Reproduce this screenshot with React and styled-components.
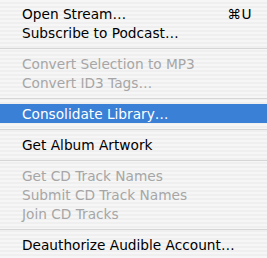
import React from 'react';
import styled, { createGlobalStyle } from "styled-components";

const items = [
    { label: 'Open Stream…', shortcut: '⌘U' },
    { label: 'Subscribe to Podcast…' },
    { sep: true },
    { label: 'Convert Selection to MP3', disabled: true },
    { label: 'Convert ID3 Tags…', disabled: true },
    { sep: true },
    { label: 'Consolidate Library…', active: true },
    { sep: true },
    { label: 'Get Album Artwork' },
    { sep: true },
    { label: 'Get CD Track Names', disabled: true },
    { label: 'Submit CD Track Names', disabled: true },
    { label: 'Join CD Tracks', disabled: true },
    { sep: true },
    { label: 'Deauthorize Audible Account…' },
];

const App = () => {
    return (
        <>
            <GlobalStyle />
            <Menu>
                {items.map((item, i) =>
                    item.sep ? (
                        <Separator key={i} />
                    ) : (
                        <Item key={i} $disabled={item.disabled} $active={item.active}>
                            <span>{item.label}</span>
                            {item.shortcut && <Shortcut>{item.shortcut}</Shortcut>}
                        </Item>
                    )
                )}
            </Menu>
        </>
    );
};

export default App;

// Style
const
    GlobalStyle = createGlobalStyle`
    html, body {
        margin: 0;
        padding: 0;
        background: #f4f4f4;
    }
`,
    Menu = styled.div`
    width: 267px;
    height: 258px;
    box-sizing: border-box;
    padding-top: 4px;
    display: flex;
    flex-direction: column;
    font-family: "DejaVu Sans", sans-serif;
    font-size: 13.7px;
    background: repeating-linear-gradient(
        to bottom,
        #f6f6f6 0px,
        #f6f6f6 2px,
        #efefef 2px,
        #efefef 4px
    );
`,
    Item = styled.div`
    height: 19px;
    flex: none;
    display: flex;
    align-items: center;
    justify-content: space-between;
    padding: 0 15px 0 22px;
    color: ${p => p.$disabled ? '#a6a6a6' : p.$active ? '#ffffff' : '#000000'};
    background: ${p => p.$active ? '#3a80d7' : 'transparent'};
    white-space: nowrap;
`,
    Shortcut = styled.span`
    letter-spacing: 0.5px;
`,
    Separator = styled.div`
    height: 12px;
    flex: none;
    display: flex;
    align-items: center;
    &::after {
        content: '';
        display: block;
        width: 100%;
        height: 1px;
        background: #d6d6d6;
    }
`;
